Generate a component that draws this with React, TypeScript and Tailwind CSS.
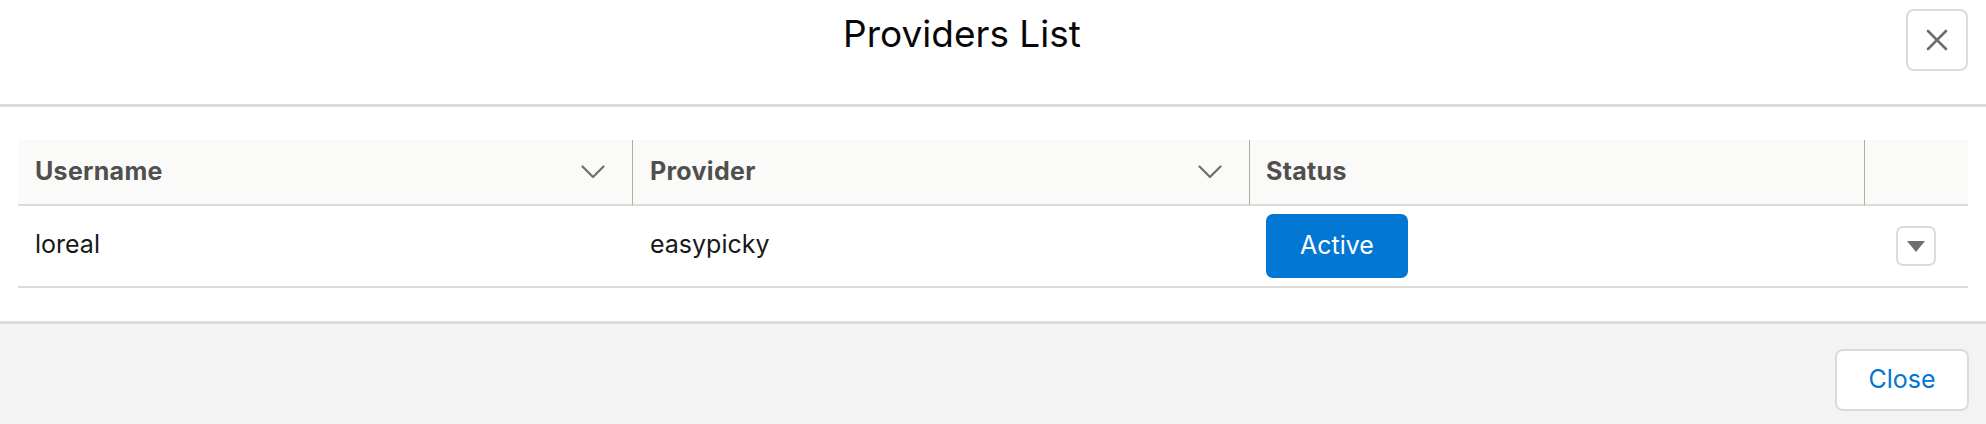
import React from "react";

const Chevron = () => (
  <svg width="24" height="14" viewBox="0 0 24 14" fill="none" className="shrink-0">
    <path d="M1.5 1.5 L12 12 L22.5 1.5" stroke="#706e6b" strokeWidth="2.2" strokeLinecap="round" strokeLinejoin="round" />
  </svg>
);

export default function App() {
  return (
    <div className="w-[1986px] h-[424px] bg-white flex flex-col text-[#181818]" style={{ fontFamily: "Inter, 'Liberation Sans', sans-serif" }}>
      {/* Header */}
      <div className="h-[107px] shrink-0 border-b-[3px] border-[#dddbda] flex items-start px-[18px] pt-[9px]">
        <h2 className="flex-1 text-center text-[37px] leading-[45px] mt-[2px] text-[#080707]">Providers List</h2>
        <button className="w-[62px] h-[62px] rounded-[8px] border-2 border-[#dddbda] bg-white flex items-center justify-center">
          <svg width="22" height="22" viewBox="0 0 22 22">
            <path d="M2 2 L20 20 M20 2 L2 20" stroke="#706e6b" strokeWidth="2.6" strokeLinecap="round" />
          </svg>
        </button>
      </div>

      {/* Body */}
      <div className="flex-1 px-[18px] pt-[33px] bg-white">
        <div className="grid grid-cols-[615px_617px_615px_1fr]">
          {/* header row */}
          <div className="h-[66px] bg-[#fafaf9] border-b-2 border-[#dddbda] flex items-center pl-[17px] pr-[27px] border-r border-r-[#b0adab] text-[25px] tracking-[0.3px] font-bold text-[#514f4d]">
            <span className="flex-1">Username</span>
            <Chevron />
          </div>
          <div className="h-[66px] bg-[#fafaf9] border-b-2 border-[#dddbda] flex items-center pl-[17px] pr-[27px] border-r border-r-[#b0adab] text-[25px] tracking-[0.3px] font-bold text-[#514f4d]">
            <span className="flex-1">Provider</span>
            <Chevron />
          </div>
          <div className="h-[66px] bg-[#fafaf9] border-b-2 border-[#dddbda] flex items-center pl-[16px] border-r border-r-[#b0adab] text-[25px] tracking-[0.3px] font-bold text-[#514f4d]">
            <span className="flex-1">Status</span>
          </div>
          <div className="h-[66px] bg-[#fafaf9] border-b-2 border-[#dddbda]" />

          {/* data row */}
          <div className="h-[82px] border-b-2 border-[#dddbda] flex items-center pl-[17px] pb-[2px] text-[25px]">loreal</div>
          <div className="h-[82px] border-b-2 border-[#dddbda] flex items-center pl-[17px] pb-[2px] text-[25px]">easypicky</div>
          <div className="h-[82px] border-b-2 border-[#dddbda] flex items-center pl-[16px]">
            <button className="w-[142px] h-[64px] rounded-[7px] bg-[#0176d3] text-white text-[25px]">Active</button>
          </div>
          <div className="h-[82px] border-b-2 border-[#dddbda] flex items-center justify-end pr-[32px]">
            <button className="w-[40px] h-[40px] rounded-[7px] border-2 border-[#dddbda] bg-white flex items-center justify-center">
              <svg width="18" height="11" viewBox="0 0 18 11">
                <path d="M0 0 H18 L9 11 Z" fill="#706e6b" />
              </svg>
            </button>
          </div>
        </div>
      </div>

      {/* Footer */}
      <div className="h-[103px] shrink-0 border-t-[3px] border-[#dddbda] bg-[#f3f3f3] flex justify-end items-start pt-[25px] pr-[17px]">
        <button className="w-[134px] h-[62px] rounded-[8px] border-2 border-[#dddbda] bg-white text-[#0176d3] text-[25px]">Close</button>
      </div>
    </div>
  );
}
